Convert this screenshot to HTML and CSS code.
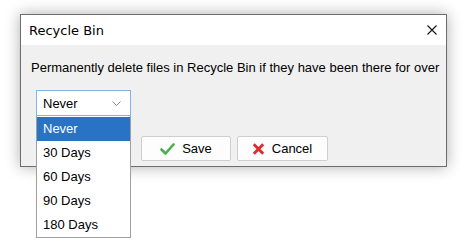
FILE: index.html
```html
<!DOCTYPE html>
<html>
<head>
<meta charset="utf-8">
<link rel="stylesheet" href="styles.css">
</head>
<body>
<div class="dialog">
  <div class="titlebar">
    <span class="title">Recycle Bin</span>
    <svg class="close" width="10" height="10" viewBox="0 0 10 10"><path d="M0.5 0.5 L9.5 9.5 M9.5 0.5 L0.5 9.5" stroke="#111" stroke-width="1.1" fill="none"/></svg>
  </div>
  <div class="content">
    <div class="msg">Permanently delete files in Recycle Bin if they have been there for over</div>
    <div class="select-wrap">
      <div class="select">
        <span>Never</span>
        <svg class="chev" width="9" height="5" viewBox="0 0 9 5"><path d="M0.5 0.5 L4.5 4.5 L8.5 0.5" stroke="#8a8a8a" stroke-width="1" fill="none"/></svg>
      </div>
      <ul class="menu">
        <li class="sel">Never</li>
        <li>30 Days</li>
        <li>60 Days</li>
        <li>90 Days</li>
        <li>180 Days</li>
      </ul>
    </div>
    <div class="buttons">
      <button class="btn save">
        <svg width="15" height="12" viewBox="0 0 15 12"><path d="M1.5 6.5 L5.5 10.5 L13.5 1.5" stroke="#4cae4c" stroke-width="2.6" fill="none" stroke-linecap="round" stroke-linejoin="round"/></svg>
        <span>Save</span>
      </button>
      <button class="btn cancel">
        <svg width="13" height="12" viewBox="0 0 13 12"><path d="M1.8 1.3 L11.2 10.7 M11.2 1.3 L1.8 10.7" stroke="#e0282d" stroke-width="2.8" fill="none" stroke-linecap="butt"/></svg>
        <span>Cancel</span>
      </button>
    </div>
  </div>
</div>
</body>
</html>
```

FILE: styles.css
```css
html, body {
  margin: 0;
  padding: 0;
  background: #ffffff;
}
html {
  height: 100%;
}
body {
  box-sizing: border-box;
  min-height: 252px;
  height: 100%;
  padding: 14px 0 0 20px;
  font-family: "Liberation Sans", Arial, sans-serif;
  font-size: 13px;
  color: #000;
}
.dialog {
  position: relative;
  width: 425px;
  border: 1px solid #6d6d6d;
  background: #f0f0f0;
  box-shadow: 0 0 14px rgba(0, 0, 0, 0.32);
}
.titlebar {
  height: 30px;
  background: #ffffff;
  display: flex;
  align-items: center;
  justify-content: space-between;
  padding: 0 9px 0 8px;
}
.title {
  font-family: "DejaVu Sans", sans-serif;
  font-size: 13px;
  color: #000;
}
.close {
  display: block;
}
.content {
  padding: 15px 10px 5px 10px;
}
.msg {
  line-height: 15px;
  height: 15px;
  white-space: nowrap;
}
.select-wrap {
  position: relative;
  margin: 15px 0 0 5px;
  width: 95px;
  z-index: 5;
}
.select {
  box-sizing: border-box;
  height: 26px;
  border: 1px solid #7eb4ea;
  background: #ffffff;
  display: flex;
  align-items: center;
  justify-content: space-between;
  padding: 0 9px 0 6px;
}
.chev {
  display: block;
}
.menu {
  position: absolute;
  left: 0;
  top: 26px;
  width: 95px;
  box-sizing: border-box;
  margin: 0;
  padding: 1px 0 0 0;
  list-style: none;
  background: #ffffff;
  border: 1px solid #a0a0a0;
  border-top: none;
}
.menu li {
  height: 24px;
  line-height: 24px;
  padding-left: 6px;
}
.menu li.sel {
  background: #2a72c3;
  color: #ffffff;
}
.buttons {
  display: flex;
  justify-content: center;
  gap: 6px;
  margin-top: 20px;
  padding-left: 1px;
}
.btn {
  box-sizing: border-box;
  height: 25px;
  border: 1px solid #cfcfcf;
  border-radius: 2px;
  background: #fdfdfd;
  font-family: "Liberation Sans", Arial, sans-serif;
  font-size: 13px;
  color: #000;
  display: flex;
  align-items: center;
  justify-content: center;
  gap: 7px;
  padding: 0;
}
.btn svg {
  display: block;
}
.save {
  width: 90px;
  padding-left: 1px;
}
.cancel {
  width: 91px;
}
```
